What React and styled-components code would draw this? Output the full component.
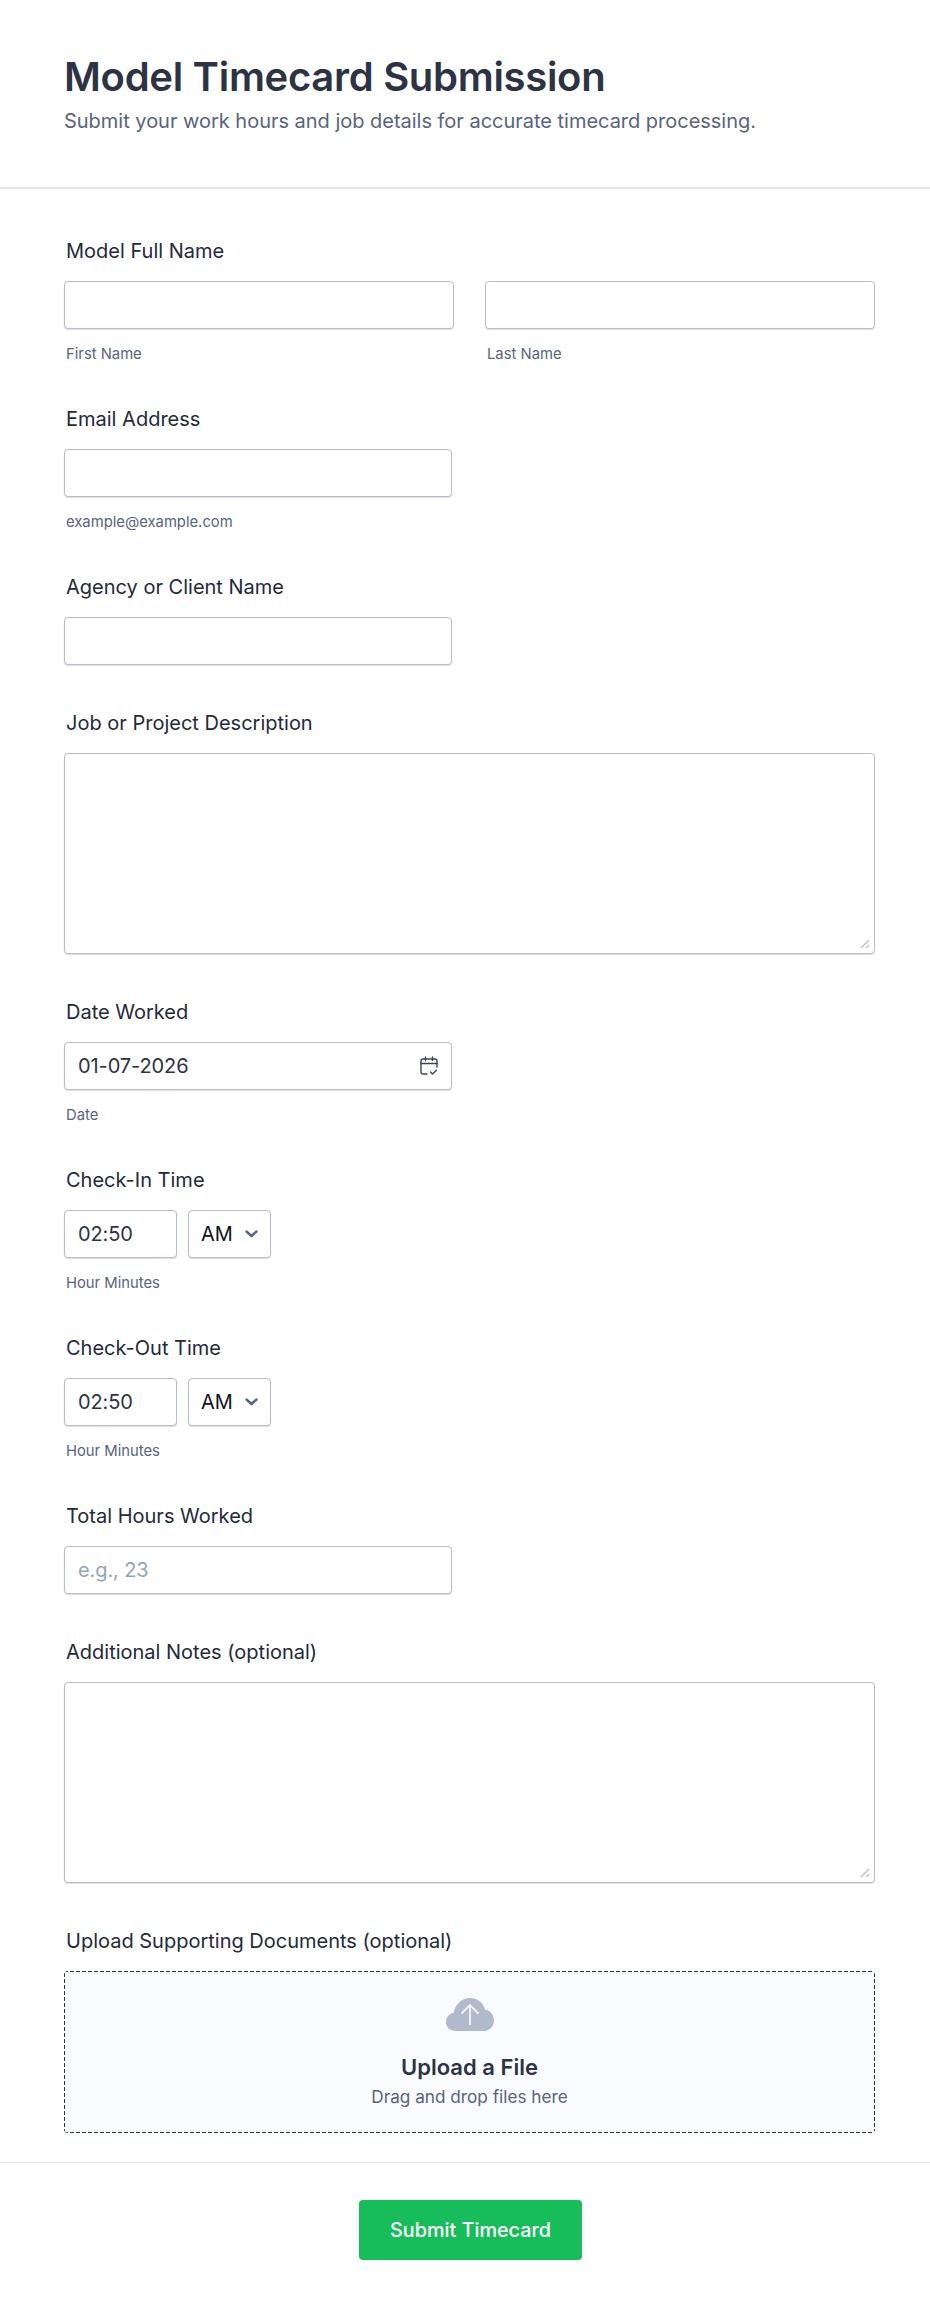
import React from "react";
import styled, { createGlobalStyle } from "styled-components";

const GlobalStyle = createGlobalStyle`
  html, body {
    margin: 0;
    padding: 0;
    background: #fff;
    font-family: Inter, "Liberation Sans", sans-serif;
  }
  * {
    box-sizing: border-box;
  }
`;

const CalendarIcon = () => (
  <svg width="18" height="20" viewBox="0 0 18 20" fill="none" stroke="#3b4459" strokeWidth="1.4" strokeLinecap="round" strokeLinejoin="round">
    <path d="M7 18H3a2 2 0 0 1-2-2V5a2 2 0 0 1 2-2h12a2 2 0 0 1 2 2v6" />
    <path d="M5.500 1v3.500M12.500 1v3.500M1 7.500h16" />
    <path d="M10.500 16l2 2 4-3.800" />
  </svg>
);

const Chevron = () => (
  <svg width="13" height="8" viewBox="0 0 13 8" fill="none" stroke="#57647e" strokeWidth="2.400" strokeLinecap="round" strokeLinejoin="round">
    <path d="M1.500 1.500 6.500 6l5-4.500" />
  </svg>
);

const CloudIcon = () => (
  <svg width="48" height="33" viewBox="0 0 48 33">
    <path
      d="M9.500 33C4 33 0 29 0 24c0-4.500 3-8.200 7.600-9.200C9.500 6 16 0 24 0c7.200 0 13.200 4.700 15 11.400 5 .9 9 5.300 9 11 0 5.900-4.600 10.600-10.500 10.600Z"
      fill="#b1bacc"
    />
    <path d="M24 27V7M15.500 15.500 24 7l8.500 8.500" fill="none" stroke="#f3f5fa" strokeWidth="1.800" />
  </svg>
);

const GripIcon = () => (
  <svg width="10" height="10" viewBox="0 0 10 10" fill="none" stroke="#b9bec9" strokeWidth="1.200">
    <path d="M1 9 9 1M6 9l3-3" />
  </svg>
);

const Page = styled.div`
  width: 930px;
  height: 2310px;
  background: #fff;
  color: #2c3345;
`;

const Header = styled.header`
  height: 189px;
  padding: 56px 64px 0;
  border-bottom: 2px solid #e3e5f0;
`;

const Title = styled.h1`
  margin: 0;
  font-size: 40px;
  line-height: 42px;
  font-weight: 600;
  letter-spacing: -0.3px;
  color: #2c3345;
`;

const Subtitle = styled.p`
  margin: 9px 0 0;
  font-size: 20px;
  line-height: 28px;
  letter-spacing: -0.02px;
  color: #57647e;
`;

const Form = styled.form`
  padding: 52px 55px 0 64px;
  display: flex;
  flex-direction: column;
  gap: 48px;
`;

const Field = styled.div`
  display: flex;
  flex-direction: column;
`;

const Label = styled.label`
  font-size: 20px;
  line-height: 20px;
  font-weight: 400;
  color: #232a3c;
  padding-left: 2px;
  margin-bottom: 20px;
`;

const Sub = styled.span`
  display: block;
  font-size: 14.8px;
  line-height: 13px;
  color: #57647e;
  padding-left: 2px;
  margin-top: 19px;
`;

const Pair = styled.div`
  display: grid;
  grid-template-columns: 390px 390px;
  gap: 31px;
`;

const Input = styled.input`
  display: block;
  width: ${(p) => p.$width || "388px"};
  height: 48px;
  padding: 0 13px;
  border: 1px solid #b8bdc9;
  border-radius: 4px;
  background: #fff;
  outline: none;
  font-family: inherit;
  font-size: 20px;
  letter-spacing: -0.1px;
  color: #2c3345;
  box-shadow: 0 1px 1px rgba(184, 189, 201, 0.5);

  &::placeholder {
    color: #94a3b8;
    opacity: 1;
  }
`;

const AreaBox = styled.div`
  position: relative;
  width: 811px;
  height: 201px;
`;

const TextArea = styled.textarea`
  display: block;
  width: 100%;
  height: 100%;
  padding: 12px;
  border: 1px solid #b8bdc9;
  border-radius: 4px;
  background: #fff;
  outline: none;
  resize: none;
  font-family: inherit;
  font-size: 20px;
  color: #2c3345;
  box-shadow: 0 1px 1px rgba(184, 189, 201, 0.5);
`;

const Grip = styled.span`
  position: absolute;
  right: 5px;
  bottom: 5px;
  display: flex;
  pointer-events: none;
`;

const DateBox = styled.div`
  position: relative;
  width: 388px;
`;

const DateIcon = styled.span`
  position: absolute;
  right: 14px;
  top: 14px;
  display: flex;
`;

const TimeRow = styled.div`
  display: flex;
  gap: 11px;
`;

const SelectBox = styled.div`
  width: 83px;
  height: 48px;
  padding: 0 12px;
  border: 1px solid #b8bdc9;
  border-radius: 4px;
  background: #fff;
  display: flex;
  align-items: center;
  justify-content: space-between;
  font-size: 20px;
  color: #0f1322;
  box-shadow: 0 1px 1px rgba(184, 189, 201, 0.5);
`;

const Dropzone = styled.div`
  width: 811px;
  height: 162px;
  border-radius: 4px;
  background-color: #fafbff;
  background-image:
    repeating-linear-gradient(90deg, #2c3345 0 4px, transparent 4px 6px),
    repeating-linear-gradient(90deg, #2c3345 0 4px, transparent 4px 6px),
    repeating-linear-gradient(0deg, #2c3345 0 4px, transparent 4px 6px),
    repeating-linear-gradient(0deg, #2c3345 0 4px, transparent 4px 6px);
  background-size: 100% 1px, 100% 1px, 1px 100%, 1px 100%;
  background-position: 0 0, 0 100%, 0 0, 100% 0;
  background-repeat: no-repeat;
  display: flex;
  flex-direction: column;
  align-items: center;
  padding-top: 27px;
`;

const DropTitle = styled.div`
  margin-top: 22px;
  font-size: 22px;
  line-height: 28px;
  font-weight: 600;
  color: #2c3345;
`;

const DropHint = styled.div`
  margin-top: 4px;
  font-size: 17.2px;
  line-height: 24px;
  color: #57647e;
`;

const Footer = styled.footer`
  margin-top: 29px;
  padding: 37px 0 0 11px;
  border-top: 1px solid #eaebf2;
  display: flex;
  justify-content: center;
`;

const Submit = styled.button`
  width: 223px;
  height: 60px;
  border: 0;
  border-radius: 4px;
  background: #18bd5b;
  color: #fff;
  font-family: inherit;
  font-size: 19.8px;
  font-weight: 500;
`;

const TimeField = ({ label }) => (
  <Field>
    <Label>{label}</Label>
    <TimeRow>
      <Input $width="113px" defaultValue="02:50" />
      <SelectBox>
        AM
        <Chevron />
      </SelectBox>
    </TimeRow>
    <Sub>Hour Minutes</Sub>
  </Field>
);

const Area = () => (
  <AreaBox>
    <TextArea />
    <Grip>
      <GripIcon />
    </Grip>
  </AreaBox>
);

export default function App() {
  return (
    <Page>
      <GlobalStyle />
      <Header>
        <Title>Model Timecard Submission</Title>
        <Subtitle>Submit your work hours and job details for accurate timecard processing.</Subtitle>
      </Header>
      <Form>
        <Field>
          <Label>Model Full Name</Label>
          <Pair>
            <div>
              <Input $width="390px" />
              <Sub>First Name</Sub>
            </div>
            <div>
              <Input $width="390px" />
              <Sub>Last Name</Sub>
            </div>
          </Pair>
        </Field>
        <Field>
          <Label>Email Address</Label>
          <Input />
          <Sub>example@example.com</Sub>
        </Field>
        <Field>
          <Label>Agency or Client Name</Label>
          <Input />
        </Field>
        <Field>
          <Label>Job or Project Description</Label>
          <Area />
        </Field>
        <Field>
          <Label>Date Worked</Label>
          <DateBox>
            <Input defaultValue="01-07-2026" />
            <DateIcon>
              <CalendarIcon />
            </DateIcon>
          </DateBox>
          <Sub>Date</Sub>
        </Field>
        <TimeField label="Check-In Time" />
        <TimeField label="Check-Out Time" />
        <Field>
          <Label>Total Hours Worked</Label>
          <Input placeholder="e.g., 23" />
        </Field>
        <Field>
          <Label>Additional Notes (optional)</Label>
          <Area />
        </Field>
        <Field>
          <Label>Upload Supporting Documents (optional)</Label>
          <Dropzone>
            <CloudIcon />
            <DropTitle>Upload a File</DropTitle>
            <DropHint>Drag and drop files here</DropHint>
          </Dropzone>
        </Field>
      </Form>
      <Footer>
        <Submit type="button">Submit Timecard</Submit>
      </Footer>
    </Page>
  );
}
